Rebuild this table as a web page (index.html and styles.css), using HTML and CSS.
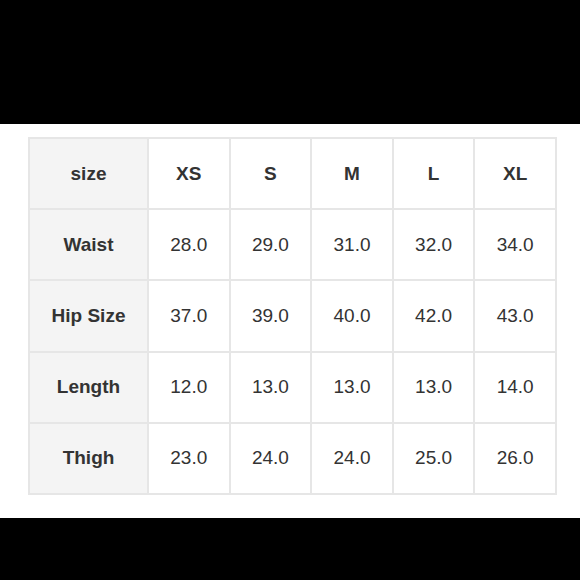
FILE: index.html
```html
<!DOCTYPE html>
<html>
<head>
<meta charset="utf-8">
<link rel="stylesheet" href="styles.css">
</head>
<body>
<div class="top"></div>
<div class="sheet">
  <div class="chart">
    <div class="cell head">size</div>
    <div class="cell colhead">XS</div>
    <div class="cell colhead">S</div>
    <div class="cell colhead">M</div>
    <div class="cell colhead">L</div>
    <div class="cell colhead">XL</div>

    <div class="cell head">Waist</div>
    <div class="cell">28.0</div>
    <div class="cell">29.0</div>
    <div class="cell">31.0</div>
    <div class="cell">32.0</div>
    <div class="cell">34.0</div>

    <div class="cell head">Hip Size</div>
    <div class="cell">37.0</div>
    <div class="cell">39.0</div>
    <div class="cell">40.0</div>
    <div class="cell">42.0</div>
    <div class="cell">43.0</div>

    <div class="cell head">Length</div>
    <div class="cell">12.0</div>
    <div class="cell">13.0</div>
    <div class="cell">13.0</div>
    <div class="cell">13.0</div>
    <div class="cell">14.0</div>

    <div class="cell head">Thigh</div>
    <div class="cell">23.0</div>
    <div class="cell">24.0</div>
    <div class="cell">24.0</div>
    <div class="cell">25.0</div>
    <div class="cell">26.0</div>
  </div>
</div>
<div class="bottom"></div>
</body>
</html>
```
FILE: styles.css
```css
html, body {
  margin: 0;
  padding: 0;
  background: #000;
  height: 580px;
  overflow: hidden;
}
.top {
  height: 124px;
  background: #000;
}
.sheet {
  height: 394px;
  background: #fff;
  padding: 13px 0 0 28px;
  box-sizing: border-box;
}
.chart {
  width: 529px;
  height: 358px;
  box-sizing: border-box;
  background: #e6e6e6;
  padding: 2px;
  display: grid;
  grid-template-columns: 117px repeat(5, 1fr);
  grid-template-rows: repeat(5, 1fr);
  gap: 2px;
}
.cell {
  background: #fff;
  display: flex;
  align-items: center;
  justify-content: center;
  font-family: "Liberation Sans", Arial, sans-serif;
  font-size: 19px;
  color: #333;
}
.head {
  background: #f4f4f4;
  font-weight: bold;
}
.colhead {
  font-weight: bold;
}
```
